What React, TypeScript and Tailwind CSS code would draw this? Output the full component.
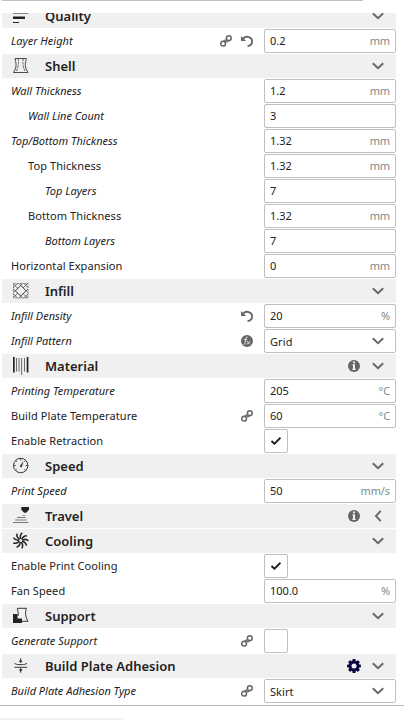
import React from "react";

type Action = "link" | "undo" | "fx";
type IconName = "quality" | "shell" | "infill" | "material" | "speed" | "travel" | "cooling" | "support" | "adhesion";

type Row =
  | { kind: "category"; label: string; icon: IconName; badge?: "info" | "gear"; collapsed?: boolean }
  | { kind: "text"; label: string; value: string; unit?: string; level?: number; italic?: boolean; actions?: Action[] }
  | { kind: "select"; label: string; value: string; italic?: boolean; actions?: Action[] }
  | { kind: "check"; label: string; checked: boolean; italic?: boolean; actions?: Action[] };

const rows: Row[] = [
  { kind: "category", label: "Quality", icon: "quality" },
  { kind: "text", label: "Layer Height", value: "0.2", unit: "mm", italic: true, actions: ["link", "undo"] },
  { kind: "category", label: "Shell", icon: "shell" },
  { kind: "text", label: "Wall Thickness", value: "1.2", unit: "mm", italic: true },
  { kind: "text", label: "Wall Line Count", value: "3", level: 1, italic: true },
  { kind: "text", label: "Top/Bottom Thickness", value: "1.32", unit: "mm", italic: true },
  { kind: "text", label: "Top Thickness", value: "1.32", unit: "mm", level: 1 },
  { kind: "text", label: "Top Layers", value: "7", level: 2, italic: true },
  { kind: "text", label: "Bottom Thickness", value: "1.32", unit: "mm", level: 1 },
  { kind: "text", label: "Bottom Layers", value: "7", level: 2, italic: true },
  { kind: "text", label: "Horizontal Expansion", value: "0", unit: "mm" },
  { kind: "category", label: "Infill", icon: "infill" },
  { kind: "text", label: "Infill Density", value: "20", unit: "%", italic: true, actions: ["undo"] },
  { kind: "select", label: "Infill Pattern", value: "Grid", italic: true, actions: ["fx"] },
  { kind: "category", label: "Material", icon: "material", badge: "info" },
  { kind: "text", label: "Printing Temperature", value: "205", unit: "°C", italic: true },
  { kind: "text", label: "Build Plate Temperature", value: "60", unit: "°C", actions: ["link"] },
  { kind: "check", label: "Enable Retraction", checked: true },
  { kind: "category", label: "Speed", icon: "speed" },
  { kind: "text", label: "Print Speed", value: "50", unit: "mm/s", italic: true },
  { kind: "category", label: "Travel", icon: "travel", badge: "info", collapsed: true },
  { kind: "category", label: "Cooling", icon: "cooling" },
  { kind: "check", label: "Enable Print Cooling", checked: true },
  { kind: "text", label: "Fan Speed", value: "100.0", unit: "%" },
  { kind: "category", label: "Support", icon: "support" },
  { kind: "check", label: "Generate Support", checked: false, italic: true, actions: ["link"] },
  { kind: "category", label: "Build Plate Adhesion", icon: "adhesion", badge: "gear" },
  { kind: "select", label: "Build Plate Adhesion Type", value: "Skirt", italic: true, actions: ["link"] },
];

const indents = ["pl-[9px]", "pl-[26px]", "pl-[43px]"];

function Chevron({ left = false }: { left?: boolean }) {
  return (
    <svg width="12" height="12" viewBox="0 0 12 12" fill="none" stroke="#666" strokeWidth="1.9" className="shrink-0">
      <path d={left ? "M8.7 .8 3.9 6l4.8 5.2" : "M.8 3.3 6 8.3l5.2-5"} />
    </svg>
  );
}

function Info() {
  return (
    <svg width="12" height="12" viewBox="0 0 12 12">
      <circle cx="6" cy="6" r="6" fill="#666" />
      <path d="M5 1.6h2v1.6H5zM4.5 4.3H7v4.5h.7V10H4.3V8.8H5V5.4h-.5z" fill="#f0f0f0" />
    </svg>
  );
}

function Gear() {
  return (
    <svg width="14" height="14" viewBox="0 0 14 14">
      <g fill="#08073f">
        {[0, 45, 90, 135].map((a) => (
          <rect key={a} x="5.4" y="0.1" width="3.2" height="13.8" rx=".7" transform={`rotate(${a} 7 7)`} />
        ))}
        <circle cx="7" cy="7" r="5.4" />
      </g>
      <circle cx="7" cy="7" r="2.5" fill="#f0f0f0" />
    </svg>
  );
}

function ActionIcon({ type }: { type: Action }) {
  if (type === "link")
    return (
      <svg width="12" height="12" viewBox="0 0 12 12" fill="none" stroke="#666" strokeWidth="1.5">
        <circle cx="3.1" cy="8.7" r="2.4" />
        <circle cx="8.8" cy="3.2" r="2.4" />
        <path d="M3.5 6.1 5.2 4.9l1.5 1.5M8.5 5.8 6.9 7.1 5.4 5.6" strokeWidth="1.1" />
      </svg>
    );
  if (type === "undo")
    return (
      <svg width="12" height="12" viewBox="0 0 12 12">
        <path d="M2.2 3.5C5.2.4 11.1 1.7 11.1 6.3c0 2.5-1.7 4.5-4.6 4.8" fill="none" stroke="#666" strokeWidth="1.8" />
        <path d="M0 1v5h5.1z" fill="#666" />
      </svg>
    );
  return (
    <svg width="12" height="12" viewBox="0 0 12 12">
      <circle cx="6" cy="6" r="6" fill="#666" />
      <path d="M6.8 2.2c-1.5-.5-1.9.6-2.1 1.9L4 8.4c-.1.8-.6 1.3-1.5 1.1M3.2 4.7h3M6.2 6.1l2.5 3.3M9.4 6 5.7 9.5" fill="none" stroke="#eee" strokeWidth=".9" />
    </svg>
  );
}

function CategoryIcon({ name }: { name: IconName }) {
  return (
    <svg width="16" height="18" viewBox="0 0 16 18" fill="none" stroke="#222" className="shrink-0">
      {name === "quality" && (
        <g fill="#222" stroke="none">
          <path d="M0 5.4h15.5V6.6H0zM0 9.6h12v2.3H0zM0 14.9h6v1.2H0z" />
        </g>
      )}
      {name === "shell" && (
        <g strokeWidth=".8">
          <path d="M2 1.5h11.300C12.600 6 10.700 8.500 15 15.500H.5C4.700 8.500 2.700 6 2 1.500Z" />
          <path d="M5.300 2c-.2 2.500 1.500 5-2.100 12.500M10.100 2c.2 2.500-1.500 5 2.100 12.500" strokeDasharray="2.500 .8" stroke="#444" />
        </g>
      )}
      {name === "infill" && (
        <g strokeWidth=".6">
          <path d="M.5 1.500h14.500v14.500H.5z" stroke="#555" strokeDasharray="2.500 .8" />
          <path d="M.5 5.500l4-4M.5 10.500l9-9M.5 15.500l14-14M6 16l9-9M11 16l4-4M.5 12l4 4M.5 7l9 9M.5 2l14 14M6 1.500l9 9M11 1.500l4 4" />
          <path d="M7.700 3.600 12.900 8.800l-5.200 5.200-5.200-5.200z" fill="#f0f0f0" />
        </g>
      )}
      {name === "material" && (
        <g fill="#222" stroke="none">
          <path d="M0 0h1.700v15.500H0zM13.700 0h1.700v15.500h-1.700z" />
          <path d="M3 1h.8v13.500H3zM5.600 1h.8v13.500h-.8zM8.300 1h.8v17h-.8zM11 1h.8v13.500H11z" opacity=".8" />
        </g>
      )}
      {name === "speed" && (
        <g>
          <circle cx="7.700" cy="8.500" r="7.200" strokeWidth=".9" />
          <path d="M7.700 1.500v2M2.700 3.500l1.300 1.300M12.700 3.500l-1.300 1.300M.7 8.500h2M14.700 8.500h-2M2.700 13.500l1.200-1.200M12.700 13.500l-1.200-1.200" strokeWidth=".8" />
          <path d="m6.900 9.500 3.300-4.700-1.700 5.400z" fill="#222" strokeWidth=".3" />
        </g>
      )}
      {name === "travel" && (
        <g>
          <path d="M8.300 0h7.700v2.700l-2.800 3h-2L8.300 2.700z" fill="#222" stroke="none" />
          <path d="M9 8.500h4" stroke="#aaa" />
          <path d="M4 10.500h8.600M2.200 13h11.400M0 15.500h15.500" stroke="#777" />
        </g>
      )}
      {name === "cooling" && (
        <g strokeWidth="1.500">
          {[0, 40, 80, 120, 160, 200, 240, 280, 320].map((a) => (
            <path key={a} d="M7.700 7C6.900 4.800 7.200 2.600 9.300.8" transform={`rotate(${a} 7.700 8.500)`} />
          ))}
        </g>
      )}
      {name === "support" && (
        <g>
          <path d="M0 7h4.500v4.500H9V16H0z" fill="#222" stroke="none" />
          <path d="M5 9C5.900 6 4.400 3.500 4.400 1.300h8.900c-1 4.500-1.400 7.500 1.700 13H9" strokeWidth=".9" />
        </g>
      )}
      {name === "adhesion" && (
        <g>
          <path d="M1.500 6.300C3 7.300 4.500 7.600 6 7.600h3.500c1.500 0 3-.3 4.500-1.300M1.500 10.300h12.700" strokeWidth=".9" />
          <path d="M7.700 1.300v3M7.700 12.500v3.200" />
          <path d="m5.800 3.700 1.900 2.400 1.900-2.400zM5.800 13.400l1.900-2.300 1.900 2.300z" fill="#222" stroke="none" />
        </g>
      )}
    </svg>
  );
}

function Category({ row }: { row: Extract<Row, { kind: "category" }> }) {
  return (
    <div className="flex h-6 items-center bg-[#f0f0f0] pr-3 pl-[11px]">
      <CategoryIcon name={row.icon} />
      <span className="ml-4 flex-1 text-[13px] leading-6 font-semibold text-[#222]">{row.label}</span>
      {row.badge && (
        <span className="mr-[11px] flex w-[14px] justify-center">{row.badge === "info" ? <Info /> : <Gear />}</span>
      )}
      <Chevron left={row.collapsed} />
    </div>
  );
}

function Setting({ row }: { row: Exclude<Row, { kind: "category" }> }) {
  const level = row.kind === "text" ? row.level ?? 0 : 0;
  return (
    <div className={`flex h-6 items-center text-[11px] leading-6 ${indents[level]}`}>
      <span className={`flex-1 text-[#222] ${row.italic ? "italic" : "tracking-[0.08px]"}`}>{row.label}</span>
      <div className="mr-[11px] flex gap-[9px]">
        {row.actions?.map((a) => <ActionIcon key={a} type={a} />)}
      </div>
      <div className="w-[132px]">
        {row.kind === "check" ? (
          <div className="flex size-6 items-center justify-center rounded-[2px] border border-[#bfbfbf] bg-white">
            {row.checked && (
              <svg width="10" height="8" viewBox="0 0 10 8" fill="none" stroke="#222" strokeWidth="2">
                <path d="M.5 4 3.5 6.7 9.5.7" />
              </svg>
            )}
          </div>
        ) : (
          <div className="flex h-6 items-center justify-between rounded-[2px] border border-[#bfbfbf] bg-white pr-[5px] pl-[5px]">
            <span className={`text-[#222] ${row.kind === "select" ? "pt-[2px] leading-[22px] tracking-[0.08px]" : ""}`}>{row.value}</span>
            {row.kind === "text" && <span className="tracking-[-0.1px] text-[#808a8c]">{row.unit}</span>}
            {row.kind === "select" && <span className="mr-[6px]"><Chevron /></span>}
          </div>
        )}
      </div>
    </div>
  );
}

export default function App() {
  return (
    <div className="flex h-[720px] w-[404px] flex-col overflow-hidden bg-white font-['Noto_Sans',sans-serif]">
      <div className="ml-[2px] h-px w-[361px] shrink-0 bg-[#bfbfbf]" />
      <div className="mt-3 ml-[2px] flex h-[692px] w-[394px] shrink-0 flex-col justify-end gap-px overflow-hidden pb-[2px]">
        {rows.map((row) => (
          <div key={row.label} className="h-6 shrink-0">
            {row.kind === "category" ? <Category row={row} /> : <Setting row={row} />}
          </div>
        ))}
      </div>
      <div className="h-px shrink-0 bg-[#b8b8b8]" />
      <div className="mt-3 h-[2px] w-[123px] shrink-0 bg-[#f0f0f0]" />
    </div>
  );
}
